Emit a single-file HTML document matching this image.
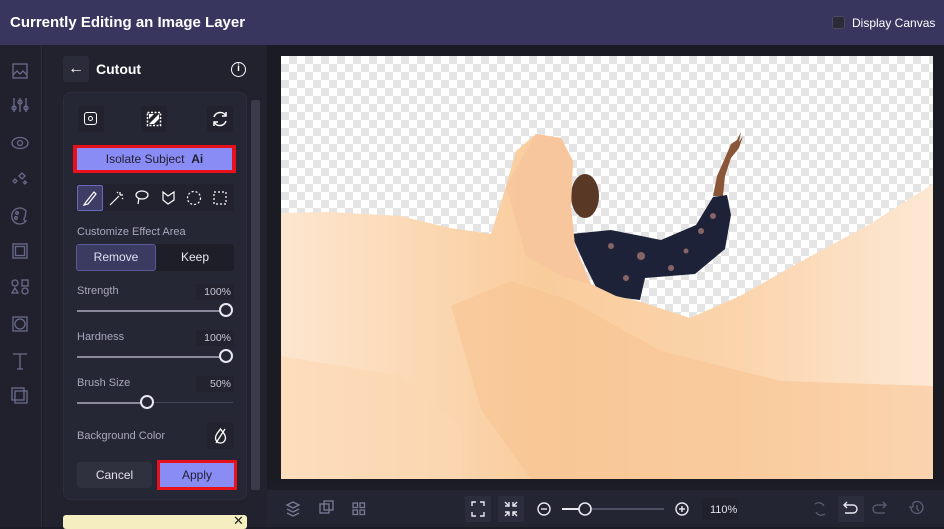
<!DOCTYPE html>
<html><head><meta charset="utf-8"><style>
*{box-sizing:border-box;margin:0;padding:0}
body{width:944px;height:527px;overflow:hidden;background:#1c1c26;font-family:"Liberation Sans",sans-serif;position:relative;color:#d8d8e4}
.abs{position:absolute}
.hdr{left:0;top:0;width:944px;height:45px;background:#38365f}
.side{left:0;top:45px;width:42px;height:482px;background:#20212d;border-right:1px solid #2c2d3a}
.panel{left:43px;top:45px;width:224px;height:482px;background:#21222e}
.card{left:63px;top:92px;width:184px;height:408px;background:#262735;border-radius:8px;border:1px solid #2d2e3d}
.lbl{font-size:11px;color:#a8a8bc}
.val{font-size:10.5px;color:#c8c8d8;background:#22232f;text-align:right;padding:2px 3px}
.track{height:2px;background:#8a8a9c}
.knob{width:14px;height:14px;border-radius:50%;border:2px solid #e8e8f0;background:#262735}
.ib{width:26px;height:26px;background:#21222e;border-radius:3px}
.ic{stroke:#6a6b8c;fill:none;stroke-width:1.3}
</style></head><body>
<div class="abs hdr"></div>
<div class="abs" style="left:10px;top:14px;font-size:15px;font-weight:bold;color:#fff">Currently Editing an Image Layer</div>
<div class="abs" style="left:832px;top:16px;width:13px;height:13px;background:#2a2a38;border-radius:3px;border:1px solid #4a4a60"></div>
<div class="abs" style="left:852px;top:16px;font-size:12px;color:#fff">Display Canvas</div>

<div class="abs side"></div>
<svg class="abs" style="left:0;top:45px" width="42" height="370">
<g class="ic">
<rect x="13" y="19" width="14" height="14"/><path d="M13 30l4-4 3 3 3-3 4 4"/>
<path d="M14 53v14M20 53v14M26 53v14"/><circle cx="14" cy="63" r="2"/><circle cx="20" cy="57" r="2"/><circle cx="26" cy="63" r="2"/>
<ellipse cx="20" cy="98" rx="8" ry="5.5"/><circle cx="20" cy="98" r="2.5"/>
<path d="M22 128l3 3-3 3-3-3z M15 134l2 2-2 2-2-2z M25 136l1.5 1.5-1.5 1.5-1.5-1.5z"/>
<path d="M26 166a8 8 0 1 0 0 10c-2 0-3-2-1-4z"/><circle cx="17" cy="168" r="1.3"/><circle cx="16" cy="173" r="1.3"/>
<rect x="13" y="199" width="14" height="14"/><rect x="15.5" y="201.5" width="9" height="9"/>
<circle cx="15" cy="238" r="3"/><rect x="22" y="235" width="6" height="6"/><path d="M15 243l-3 5h6z"/><circle cx="25" cy="246" r="3"/>
<rect x="13" y="272" width="14" height="14"/><circle cx="20" cy="279" r="5"/>
<path d="M13 309h14M20 309v15M17 324h6"/>
<rect x="15" y="346" width="12" height="12"/><rect x="12" y="343" width="12" height="12"/>
</g></svg>

<div class="abs panel"></div>
<div class="abs" style="left:63px;top:56px;width:26px;height:26px;background:#2b2c3a;border-radius:3px;color:#fff;font-size:16px;text-align:center;line-height:25px">←</div>
<div class="abs" style="left:96px;top:61px;font-size:14px;font-weight:bold;color:#fff">Cutout</div>
<div class="abs" style="left:231px;top:62px;width:15px;height:15px;border:1.5px solid #fff;border-radius:50%;font-size:10px;color:#fff;text-align:center;line-height:12px;font-weight:bold">i</div>

<div class="abs card"></div>
<div class="abs" style="left:251px;top:100px;width:9px;height:390px;background:#3a3b4a;border-radius:2px"></div>

<div class="abs ib" style="left:78px;top:106px"></div>
<div class="abs" style="left:84px;top:112px;width:13px;height:13px;border:1.5px solid #fff;border-radius:3px"></div>
<div class="abs" style="left:88px;top:116px;width:5px;height:5px;border:1.2px solid #fff;border-radius:50%"></div>
<div class="abs ib" style="left:141px;top:106px"></div>
<svg class="abs" style="left:141px;top:106px" width="26" height="26"><rect x="6.5" y="6.5" width="13" height="13" fill="none" stroke="#fff" stroke-width="1.5" stroke-dasharray="2 1.5"/><path d="M8 18l10-10v5l-5 5z" fill="#fff"/><path d="M8 8h5l-5 5z" fill="#fff"/></svg>
<div class="abs ib" style="left:207px;top:106px"></div>
<svg class="abs" style="left:207px;top:106px" width="26" height="26"><g stroke="#fff" fill="none" stroke-width="1.5"><path d="M7 11a6.5 6.5 0 0 1 12-1M19 15a6.5 6.5 0 0 1-12 1"/><path d="M19 6v4h-4M7 20v-4h4"/></g></svg>

<div class="abs" style="left:73px;top:145px;width:163px;height:28px;background:#e8101a"></div>
<div class="abs" style="left:77px;top:148px;width:155px;height:22px;background:#8a8cf6;color:#1e1e2e;font-size:12px;text-align:center;line-height:22px">Isolate Subject &nbsp;<b>Ai</b></div>

<div class="abs" style="left:76px;top:184px;width:158px;height:27px;background:#21222e"></div>
<div class="abs" style="left:77px;top:185px;width:26px;height:26px;background:#3d3d66;border:1px solid #6a6ac0;border-radius:2px"></div>
<svg class="abs" style="left:76px;top:184px" width="160" height="28"><g stroke="#fff" fill="none" stroke-width="1.2">
<path d="M8 21l4-1 8-10-2-2-8 10z"/>
<path d="M34 21l9-9M44 8v3M47 11h-3M41 8l1 1M46 14l1 1"/>
<ellipse cx="66" cy="11" rx="6" ry="4"/><path d="M63 14l-1 6"/>
<path d="M87 8l5 4 6-4v8l-6 4-5-4z"/>
<circle cx="118" cy="14" r="6.5" stroke-dasharray="2 2"/>
<rect x="138" y="8" width="12" height="12" stroke-dasharray="2 2"/></g></svg>

<div class="abs lbl" style="left:77px;top:226px">Customize Effect Area</div>
<div class="abs" style="left:76px;top:244px;width:158px;height:27px;background:#1d1e28;border-radius:3px"></div>
<div class="abs" style="left:76px;top:244px;width:80px;height:27px;background:#3b3b62;border:1px solid #5a5a9a;border-radius:3px;font-size:12px;text-align:center;line-height:25px;color:#e0e0f0">Remove</div>
<div class="abs" style="left:156px;top:244px;width:78px;height:27px;font-size:12px;text-align:center;line-height:27px;color:#e8e8f4">Keep</div>

<div class="abs lbl" style="left:77px;top:285px">Strength</div>
<div class="abs val" style="left:196px;top:284px;width:38px">100%</div>
<div class="abs track" style="left:77px;top:310px;width:150px"></div>
<div class="abs knob" style="left:219px;top:303px"></div>

<div class="abs lbl" style="left:77px;top:331px">Hardness</div>
<div class="abs val" style="left:196px;top:330px;width:38px">100%</div>
<div class="abs track" style="left:77px;top:356px;width:150px"></div>
<div class="abs knob" style="left:219px;top:349px"></div>

<div class="abs lbl" style="left:77px;top:377px">Brush Size</div>
<div class="abs val" style="left:196px;top:376px;width:38px">50%</div>
<div class="abs track" style="left:77px;top:402px;width:70px"></div>
<div class="abs" style="left:147px;top:402px;width:86px;height:1px;background:#44455a"></div>
<div class="abs knob" style="left:140px;top:395px"></div>

<div class="abs lbl" style="left:77px;top:430px">Background Color</div>
<div class="abs" style="left:207px;top:422px;width:27px;height:27px;background:#22232f;border-radius:3px"></div>
<svg class="abs" style="left:207px;top:422px" width="27" height="27"><g stroke="#fff" fill="none" stroke-width="1.3"><path d="M13.5 7c-3 4-5 6-5 9a5 5 0 0 0 10 0c0-3-2-5-5-9z"/><path d="M18 7l-9 14"/></g></svg>

<div class="abs" style="left:77px;top:462px;width:75px;height:26px;background:#30313f;border-radius:3px;font-size:12px;text-align:center;line-height:26px;color:#e0e0ec">Cancel</div>
<div class="abs" style="left:157px;top:460px;width:80px;height:30px;background:#e8101a"></div>
<div class="abs" style="left:160px;top:463px;width:74px;height:24px;background:#8a8cf6;font-size:12px;text-align:center;line-height:24px;color:#1e1e2e">Apply</div>

<div class="abs" style="left:63px;top:515px;width:184px;height:14px;background:#f4eec0;border-radius:3px"></div>
<div class="abs" style="left:233px;top:513px;font-size:13px;color:#222">✕</div>

<!-- canvas -->
<div class="abs" style="left:267px;top:45px;width:677px;height:437px;background:#1b1b24"></div>
<div class="abs" style="left:281px;top:56px;width:652px;height:423px;background-color:#fff;background-image:linear-gradient(45deg,#e4e4e4 25%,transparent 25%,transparent 75%,#e4e4e4 75%),linear-gradient(45deg,#e4e4e4 25%,transparent 25%,transparent 75%,#e4e4e4 75%);background-size:16px 16px;background-position:0 0,8px 8px"></div>
<svg class="abs" style="left:281px;top:56px" width="652" height="423">
<defs>
<linearGradient id="g1" x1="0" y1="0" x2="1" y2="0"><stop offset="0" stop-color="#fde6cf"/><stop offset="0.4" stop-color="#f9cc9c"/><stop offset="0.7" stop-color="#fbd4ac"/><stop offset="1" stop-color="#fde8d4"/></linearGradient>
</defs>
<!-- arm -->
<path d="M432 140l4-20 8-18 6-14 6-4 4-8-2 10 4-6-4 12-8 10-6 18-2 20z" fill="#8a5638"/>
<!-- body -->
<path d="M290 178l40-4 50 10 35-15 17-28 14-2 4 20-6 34-30 25-50 4-5 22-40-5-15-30z" fill="#1e2238"/>
<g fill="#c08880" opacity=".65"><circle cx="330" cy="190" r="3"/><circle cx="360" cy="200" r="4"/><circle cx="420" cy="175" r="3"/><circle cx="390" cy="212" r="3"/><circle cx="432" cy="160" r="3"/><circle cx="345" cy="222" r="3"/><circle cx="405" cy="195" r="2.5"/></g>
<!-- head -->
<ellipse cx="304" cy="140" rx="14" ry="22" fill="#5a3826"/>
<!-- fabric -->
<path d="M0 157L49 156L119 160L169 172L210 178L225 130L235 95L255 78L280 82L292 105L290 150L294 190L310 228L335 240L360 246L409 262L459 240L519 206L589 168L652 128V423H0Z" fill="url(#g1)"/>
<path d="M225 130l30-52 25 4 12 23-2 45 4 40 16 38-30-8-35-20z" fill="#f7c49c" opacity=".8"/>
<path d="M170 250l60-25 60 20 90 50 120 30 152 5v93H250l-50-70z" fill="#f8c290" opacity=".55"/>
<path d="M0 300l120 20 60 50v53H0z" fill="#fbd7b0" opacity=".6"/>
</svg>

<!-- bottom bar -->
<div class="abs" style="left:267px;top:490px;width:677px;height:37px;background:#242533"></div>
<svg class="abs" style="left:267px;top:490px" width="677" height="37"><g stroke="#7a7b94" fill="none" stroke-width="1.3">
<path d="M20 15l6-3 6 3-6 3z M20 19l6 3 6-3 M20 23l6 3 6-3"/>
<rect x="53" y="14" width="9" height="9"/><rect x="57" y="11" width="9" height="9"/>
<rect x="86" y="13" width="4.5" height="4.5"/><rect x="93" y="13" width="4.5" height="4.5"/><rect x="86" y="20" width="4.5" height="4.5"/><rect x="93" y="20" width="4.5" height="4.5"/>
</g>
<rect x="198" y="6" width="26" height="26" fill="#2c2d3c"/><rect x="231" y="6" width="26" height="26" fill="#2c2d3c"/>
<g stroke="#e8e8f0" fill="none" stroke-width="1.4">
<path d="M205 16v-4h4M217 16v-4h-4M205 22v4h4M217 22v4h-4"/>
<path d="M238 12l4 4M242 12v4h-4M250 12l-4 4M246 12v4h4M238 26l4-4M238 22h4v4M250 26l-4-4M250 22h-4v4"/>
<circle cx="277" cy="19" r="6"/><path d="M274 19h6"/>
<circle cx="415" cy="19" r="6"/><path d="M412 19h6M415 16v6"/>
</g>
<rect x="295" y="18" width="22" height="2" fill="#e8e8f0"/><rect x="317" y="18.5" width="80" height="1" fill="#7a7b94"/>
<circle cx="318" cy="19" r="6" fill="#242533" stroke="#e8e8f0" stroke-width="1.6"/>
<rect x="435" y="8" width="36" height="22" fill="#20212d"/>
<text x="443" y="23" font-size="11" fill="#e0e0ec" font-family="Liberation Sans">110%</text>
<rect x="571" y="6" width="26" height="26" fill="#2c2d3c"/>
<g stroke="#5c5d74" fill="none" stroke-width="1.3"><path d="M548 14a6 6 0 0 1 9 2M558 24a6 6 0 0 1-9-2"/><path d="M612 23h8a4 4 0 0 0 0-8h-9M614 12l-3 3 3 3" transform="translate(1230 0) scale(-1 1)"/><path d="M646 13a6 6 0 1 1-2 4M646 13v4h-4"/><path d="M650 15v4l2 2"/></g>
<path d="M590 23h-8a4 4 0 0 1 0-8h9M588 12l3 3-3 3" stroke="#e8e8f0" fill="none" stroke-width="1.4" transform="translate(1168 0) scale(-1 1)"/>
</svg>
</body></html>
